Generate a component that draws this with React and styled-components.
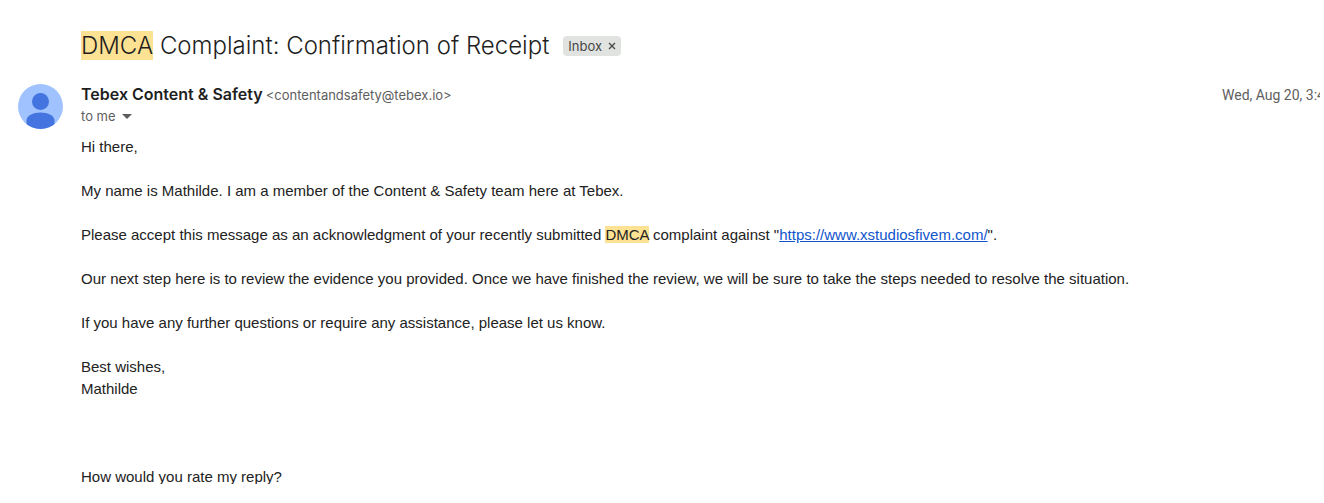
import styled, { createGlobalStyle } from 'styled-components';

const GlobalStyle = createGlobalStyle`
  * {
    box-sizing: border-box;
  }

  body {
    margin: 0;
    background: #fff;
    color: #1f1f1f;
    font-family: Inter, 'Liberation Sans', sans-serif;
  }
`;

const Thread = styled.main`
  display: flex;
  flex-direction: column;
  height: calc(100vh - 19px);
  margin-right: 4px;
  padding-top: 28px;
  overflow: hidden;
`;

const SubjectBar = styled.header`
  display: flex;
  align-items: center;
  gap: 14px;
  padding-left: 81px;
`;

const Subject = styled.h1`
  margin: 0;
  font-size: 24px;
  font-weight: 300;
  line-height: 35px;
`;

const Highlight = styled.mark`
  background: #fde293;
  color: inherit;
`;

const Label = styled.span`
  display: flex;
  align-items: center;
  gap: 6px;
  height: 20px;
  padding: 0 5px;
  border-radius: 4px;
  background: #e1e3e1;
  color: #444746;
  font-size: 13px;
`;

const LabelRemove = styled.button`
  display: flex;
  padding: 0;
  border: 0;
  background: none;
  color: inherit;
  cursor: pointer;
`;

const Message = styled.article`
  display: grid;
  grid-template-columns: 45px 1fr;
  column-gap: 18px;
  padding: 21px 0 0 18px;
`;

const Avatar = styled.svg`
  width: 45px;
  height: 45px;
`;

const Details = styled.div`
  min-width: 0;
`;

const SenderRow = styled.div`
  display: flex;
  align-items: baseline;
  gap: 3px;
  line-height: 20px;
`;

const Sender = styled.span`
  font-size: 16px;
  font-weight: 600;
`;

const Address = styled.span`
  color: #5e5e5e;
  font-size: 13px;
`;

const DateClip = styled.span`
  width: 98px;
  margin-left: auto;
  overflow: hidden;
  color: #5e5e5e;
  font-family: Roboto, sans-serif;
  font-size: 14px;
  white-space: nowrap;
`;

const Recipient = styled.button`
  display: flex;
  align-items: center;
  gap: 6px;
  padding: 0;
  border: 0;
  background: none;
  color: #5e5e5e;
  font-family: inherit;
  font-size: 13px;
  line-height: 22px;
  cursor: pointer;
`;

const Body = styled.div`
  padding-top: 9px;
  color: #222;
  font-family: 'Liberation Sans', Arial, sans-serif;
  font-size: 15px;
  line-height: 22px;
`;

const Paragraph = styled.p`
  margin: 0 0 22px;
`;

const Rating = styled.p`
  margin: 66px 0 0;
`;

const Link = styled.a`
  color: #1155cc;
`;

const App = () => (
  <>
    <GlobalStyle />
    <Thread>
      <SubjectBar>
        <Subject>
          <Highlight>DMCA</Highlight> Complaint: Confirmation of Receipt
        </Subject>
        <Label>
          Inbox
          <LabelRemove type="button" aria-label="Remove label Inbox">
            <svg width="8" height="8" viewBox="0 0 8 8" stroke="currentColor" strokeWidth="1.3">
              <path d="M1 1l6 6M7 1l-6 6" />
            </svg>
          </LabelRemove>
        </Label>
      </SubjectBar>
      <Message>
        <Avatar viewBox="0 0 45 45" aria-hidden="true">
          <clipPath id="avatar">
            <circle cx="22.5" cy="22.5" r="22.5" />
          </clipPath>
          <g clipPath="url(#avatar)">
            <rect width="45" height="45" fill="#a0c3ff" />
            <circle cx="22.5" cy="17.5" r="8.5" fill="#4374e0" />
            <path d="M8.5 45v-8.5c0-5 6.5-8 14-8s14 3 14 8v8.5z" fill="#4374e0" />
          </g>
        </Avatar>
        <Details>
          <SenderRow>
            <Sender>Tebex Content &amp; Safety</Sender>
            <Address>&lt;contentandsafety@tebex.io&gt;</Address>
            <DateClip>Wed, Aug 20, 3:4</DateClip>
          </SenderRow>
          <Recipient type="button">
            to me
            <svg width="10" height="5" viewBox="0 0 10 5" fill="currentColor" aria-hidden="true">
              <path d="M0 0h10L5 5z" />
            </svg>
          </Recipient>
          <Body>
            <Paragraph>Hi there,</Paragraph>
            <Paragraph>
              My name is Mathilde. I am a member of the Content &amp; Safety team here at Tebex.
            </Paragraph>
            <Paragraph>
              Please accept this message as an acknowledgment of your recently submitted{' '}
              <Highlight>DMCA</Highlight> complaint against "
              <Link href="https://www.xstudiosfivem.com/">https://www.xstudiosfivem.com/</Link>".
            </Paragraph>
            <Paragraph>
              Our next step here is to review the evidence you provided. Once we have finished the
              review, we will be sure to take the steps needed to resolve the situation.
            </Paragraph>
            <Paragraph>
              If you have any further questions or require any assistance, please let us know.
            </Paragraph>
            <Paragraph>
              Best wishes,
              <br />
              Mathilde
            </Paragraph>
            <Rating>How would you rate my reply?</Rating>
          </Body>
        </Details>
      </Message>
    </Thread>
  </>
);

export default App;
